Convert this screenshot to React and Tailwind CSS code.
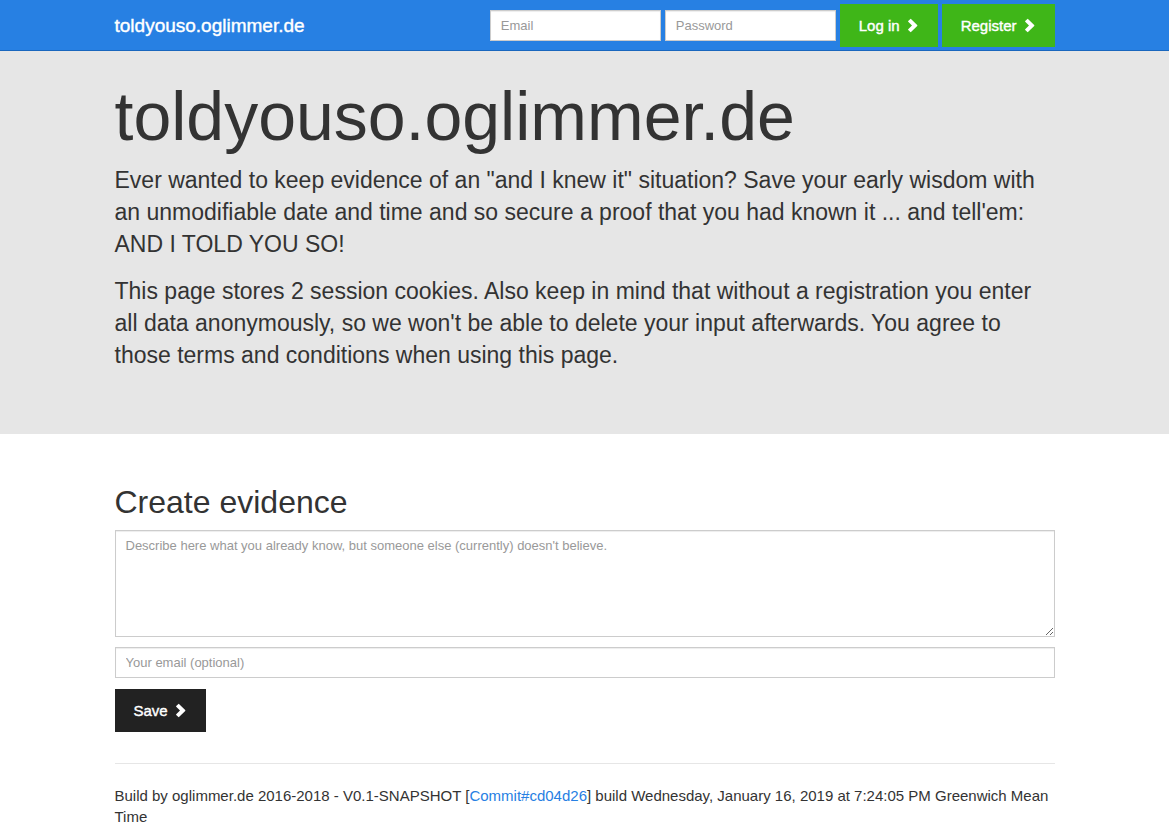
function Chevron() {
  return (
    <svg viewBox="0 0 15 15" className="size-[15px] fill-current" aria-hidden="true">
      <path d="M6.4 .9Q6.7 .6 7 .9L13.2 7.1Q13.6 7.5 13.2 7.9L7 14.1Q6.7 14.4 6.4 14.1L4.2 11.9Q3.9 11.6 4.2 11.3L8 7.5L4.2 3.7Q3.9 3.4 4.2 3.1Z" />
    </svg>
  );
}

function Container({ children }) {
  return <div className="mx-auto w-full max-w-[970px] px-[15px]">{children}</div>;
}

const field =
  "block h-[31px] border border-[#cccccc] bg-white px-[10px] text-[13px] text-[#555555] shadow-[inset_0_1px_1px_rgba(0,0,0,0.075)] outline-none placeholder:text-[#999999]";
const button =
  "flex h-[43px] items-center gap-1 px-[19px] text-[15px] text-white [-webkit-text-stroke:0.4px]";

export default function App() {
  return (
    <div className="font-['Liberation_Sans',Arial,sans-serif] text-[15px] leading-[21px] text-[#333333]">
      <nav className="border-b border-[#1967be] bg-[#2780e3]">
        <Container>
          <div className="flex min-h-[50px] flex-wrap items-center justify-between">
            <a href="#" className="text-[19px] text-white [-webkit-text-stroke:0.4px]">
              toldyouso.oglimmer.de
            </a>
            <form className="flex flex-wrap items-center gap-1" onSubmit={(e) => e.preventDefault()}>
              <input type="text" aria-label="Email" placeholder="Email" className={`${field} w-[171px]`} />
              <input type="password" aria-label="Password" placeholder="Password" className={`${field} w-[171px]`} />
              <button type="submit" className={`${button} bg-[#3fb618]`}>
                Log in <Chevron />
              </button>
              <button type="button" className={`${button} bg-[#3fb618]`}>
                Register <Chevron />
              </button>
            </form>
          </div>
        </Container>
      </nav>

      <header className="bg-[#e6e6e6] pt-[30px] pb-[48px]">
        <Container>
          <h1 className="mb-[13px] text-[68px] leading-[70px]">toldyouso.oglimmer.de</h1>
          <p className="mb-[15px] text-[23px] leading-[32px]">
            Ever wanted to keep evidence of an "and I knew it" situation? Save your early wisdom with an
            unmodifiable date and time and so secure a proof that you had known it ... and tell'em: AND I TOLD YOU
            SO!
          </p>
          <p className="mb-[15px] text-[23px] leading-[32px]">
            This page stores 2 session cookies. Also keep in mind that without a registration you enter all data
            anonymously, so we won't be able to delete your input afterwards. You agree to those terms and
            conditions when using this page.
          </p>
        </Container>
      </header>

      <Container>
        <main className="pt-[51px]">
          <h2 className="mb-[10px] text-[32px] leading-[35px]">Create evidence</h2>
          <form className="flex flex-col items-start" onSubmit={(e) => e.preventDefault()}>
            <textarea
              aria-label="Evidence"
              placeholder="Describe here what you already know, but someone else (currently) doesn't believe."
              className="mb-[10px] block h-[107px] w-full resize-y border border-[#cccccc] px-[10px] py-[5px] text-[13px] leading-[19px] text-[#555555] shadow-[inset_0_1px_1px_rgba(0,0,0,0.075)] outline-none placeholder:text-[#999999]"
            />
            <input
              type="email"
              aria-label="Your email"
              placeholder="Your email (optional)"
              className={`${field} mb-[11px] w-full`}
            />
            <button type="submit" className={`${button} bg-[#222222]`}>
              Save <Chevron />
            </button>
          </form>
        </main>
        <hr className="mt-[31px] mb-[21px] border-t border-[#e6e6e6]" />
        <footer>
          <p className="mb-[10px]">
            Build by oglimmer.de 2016-2018 - V0.1-SNAPSHOT [
            <a href="#" className="text-[#2780e3]">Commit#cd04d26</a>] build Wednesday, January 16, 2019 at 7:24:05
            PM Greenwich Mean Time
          </p>
        </footer>
      </Container>
    </div>
  );
}
